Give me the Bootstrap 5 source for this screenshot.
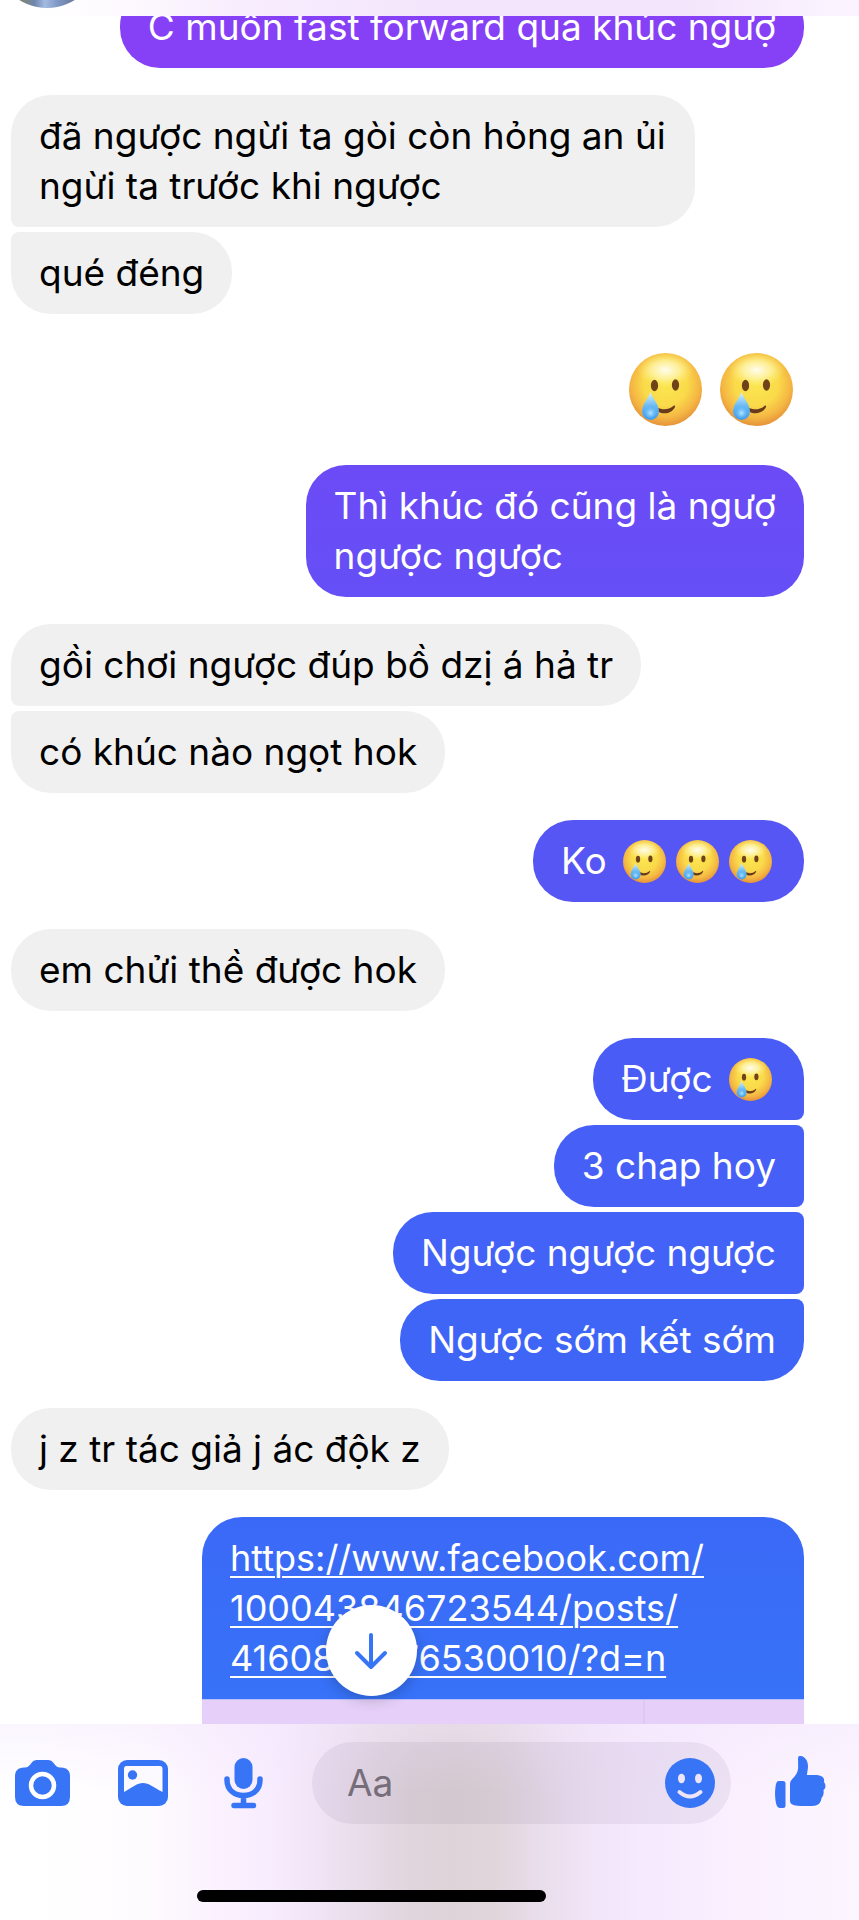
<!DOCTYPE html>
<html lang="vi">
<head>
<meta charset="utf-8">
<meta name="viewport" content="width=device-width, initial-scale=1">
<title>Tin nhắn</title>
<link href="https://cdn.jsdelivr.net/npm/bootstrap@5.3.0/dist/css/bootstrap.min.css" rel="stylesheet">
<style>
  body { font-family: Inter, "Noto Sans", sans-serif; background: #fff; color: #000; }
  .top-strip { height: 16px; background: linear-gradient(90deg, #fff 4%, #fdf9fe 15%, #f8edfe 28%, #f3e6fc 50%, #f3e5fb 80%, #fbf3ff 97%); z-index: 2; }
  .avatar { width: 104px; height: 104px; left: -5px; bottom: 8px; background: linear-gradient(90deg, #7d8474 25%, #6f87ad 38%, #a3bbe0 48%, #7f97c6 60%, #6c7c9c 75%); }
  .thread { padding: 0 55px 0 11px; gap: 27px; min-height: 0; }
  .run { gap: 5px; }
  .bubble { padding: 16px 28px; border-radius: 40px; font-size: 37px; line-height: 50px; max-width: 684px; overflow-wrap: break-word; }
  .them .bubble { background: #f0f0f0; }
  .them .bubble:not(:last-child) { border-bottom-left-radius: 8px; }
  .them .bubble:not(:first-child) { border-top-left-radius: 8px; }
  .me .bubble { color: #fff; max-width: 720px; }
  .me .bubble:not(:last-child) { border-bottom-right-radius: 8px; }
  .me .bubble:not(:first-child) { border-top-right-radius: 8px; }
  .tone-1 { background: #8640f6; }
  .tone-2 { background: linear-gradient(#6c4bf6, #654ff6); }
  .tone-3 { background: #5656f5; }
  .tone-4 { background: #4a5cf6; }
  .tone-5 { background: #465ff6; }
  .tone-6 { background: #4362f7; }
  .tone-7 { background: #3f65f7; }
  .tone-8 { background: linear-gradient(#3b69f7, #3772f8); }
  .emoji { width: 43px; height: 43px; margin: 0 4px 0 6px; vertical-align: -9px; }
  .big-emoji { padding: 12px 11px; gap: 18px; }
  .big-emoji svg { width: 73px; height: 73px; }
  .shared { width: 602px; border-radius: 40px 40px 0 0; overflow: hidden; }
  .shared a { display: block; padding: 16px 28px; color: #fff; font-size: 36px; line-height: 50px; text-decoration-thickness: 2px; text-underline-offset: 5px; }
  .preview { height: 25px; border-top: 1px solid #b9bffa; background: #e6d0f9; }
  .preview i { width: 2px; margin-left: 441px; height: 100%; background: #dec9f1; display: block; }
  .composer { height: 196px; background: linear-gradient(#f3e7fd66, #f3e7fd00 35%), linear-gradient(90deg, #fff 4%, #fefbff 17%, #fbf2fe 25%, #f7ecfe 32%, #f0e4f6 37%, #e8dde9 42%, #e0d5dc 48%, #ded3d8 53%, #e1d6dc 58%, #e9deeb 63%, #f1e5f8 69%, #f5eafe 75%, #faf0fe 86%, #fcf6ff 100%); }
  .composer button { border: 0; background: none; padding: 0; color: #3875f6; line-height: 0; }
  .tools { padding: 18px 33px 0 14px; }
  .tool-set { gap: 46px; width: 298px; }
  .field { height: 82px; min-width: 0; margin-right: 43px; border-radius: 41px; background: #5a3c6e14; padding: 0 16px 0 35px; }
  .field input { width: 0; font-size: 37px; color: #000; background: none; border: 0; outline: 0; min-width: 0; padding: 0; }
  .field input::placeholder { color: #766d7a; opacity: 1; }
  .jump { width: 91px; height: 91px; left: calc(50% - 104px); bottom: 28px; border: 0; background: #fff; color: #3875f6; box-shadow: 0 4px 14px #0003; }
  .home-bar { width: 349px; height: 12px; border-radius: 6px; background: #000; left: 197px; bottom: 18px; }
</style>
</head>
<body>
<svg width="0" height="0" class="position-absolute" aria-hidden="true">
  <defs>
    <radialGradient id="skin" cx=".5" cy=".42" r=".6">
      <stop offset="0" stop-color="#fbe650"/><stop offset=".5" stop-color="#fada4a"/><stop offset=".78" stop-color="#f4b643"/><stop offset="1" stop-color="#e28c38"/>
    </radialGradient>
    <radialGradient id="shine">
      <stop offset="0" stop-color="#fffdf0"/><stop offset=".5" stop-color="#fff8bc" stop-opacity=".7"/><stop offset="1" stop-color="#fff27a" stop-opacity="0"/>
    </radialGradient>
    <linearGradient id="drop" x1="0" y1="0" x2="0" y2="1">
      <stop offset="0" stop-color="#d9f3fd"/><stop offset=".5" stop-color="#69b9f3"/><stop offset="1" stop-color="#3f9bee"/>
    </linearGradient>
    <radialGradient id="dropGlow"><stop offset="0" stop-color="#b5e6fd"/><stop offset="1" stop-color="#7fd0fa" stop-opacity="0"/></radialGradient>
    <symbol id="tear" viewBox="0 0 73 73">
      <circle cx="36.500" cy="36.500" r="36.500" fill="url(#skin)"/>
      <ellipse cx="36.500" cy="17" rx="28" ry="17" fill="url(#shine)"/>
      <ellipse cx="25.500" cy="32.500" rx="3.600" ry="5.800" fill="#70421a"/>
      <ellipse cx="46.500" cy="32" rx="3.600" ry="5.800" fill="#70421a"/>
      <path d="M28 54.500C34 57.500 41 56.500 45 52.500Q46.500 52 46 54C42.500 61 34 62 28 58Z" fill="#68391a"/>
      <path d="M21.500 39C24 46 30 51.500 30 58.500A8.500 8.500 0 0 1 13 58.500C13 51.500 19 46 21.500 39Z" fill="url(#drop)"/>
      <ellipse cx="21.500" cy="60" rx="6" ry="6" fill="url(#dropGlow)"/>
    </symbol>
  </defs>
</svg>
<div class="vh-100 d-flex flex-column overflow-hidden">
  <header class="top-strip position-relative flex-shrink-0 overflow-hidden">
    <div class="avatar position-absolute rounded-circle"></div>
  </header>

  <main class="position-relative flex-grow-1 d-flex flex-column justify-content-end overflow-hidden thread">
    <div class="run me d-flex flex-column align-items-end"><div class="bubble tone-1">C muốn fast forward qua khúc ngượ</div></div>
    <div class="run them d-flex flex-column align-items-start">
      <div class="bubble">đã ngược ngừi ta gòi còn hỏng an ủi ngừi ta trước khi ngược</div>
      <div class="bubble">qué đéng</div>
    </div>
    <div class="big-emoji d-flex justify-content-end">
      <svg role="img" aria-label="🥲"><use href="#tear"/></svg><svg role="img" aria-label="🥲"><use href="#tear"/></svg>
    </div>
    <div class="run me d-flex flex-column align-items-end"><div class="bubble tone-2">Thì khúc đó cũng là ngượ<br>ngược ngược</div></div>
    <div class="run them d-flex flex-column align-items-start">
      <div class="bubble">gồi chơi ngược đúp bồ dzị á hả tr</div>
      <div class="bubble">có khúc nào ngọt hok</div>
    </div>
    <div class="run me d-flex flex-column align-items-end"><div class="bubble tone-3">Ko <svg class="emoji"><use href="#tear"/></svg><svg class="emoji"><use href="#tear"/></svg><svg class="emoji"><use href="#tear"/></svg></div></div>
    <div class="run them d-flex flex-column align-items-start"><div class="bubble">em chửi thề được hok</div></div>
    <div class="run me d-flex flex-column align-items-end">
      <div class="bubble tone-4">Được <svg class="emoji"><use href="#tear"/></svg></div>
      <div class="bubble tone-5">3 chap hoy</div>
      <div class="bubble tone-6">Ngược ngược ngược</div>
      <div class="bubble tone-7">Ngược sớm kết sớm</div>
    </div>
    <div class="run them d-flex flex-column align-items-start"><div class="bubble">j z tr tác giả j ác độk z</div></div>
    <div class="run me d-flex flex-column align-items-end">
      <div class="shared">
        <a class="tone-8" href="#">https://www.facebook.com/<br>100043846723544/posts/<br>4160837576530010/?d=n</a>
        <div class="preview"><i></i></div>
      </div>
    </div>
    <button class="jump position-absolute rounded-circle d-flex align-items-center justify-content-center" type="button" aria-label="Xuống cuối">
      <svg width="34" height="38" viewBox="0 0 34 38" fill="none" stroke="currentColor" stroke-width="4" stroke-linecap="round" stroke-linejoin="round"><path d="M17 3V35M3 21L17 35L31 21"/></svg>
    </button>
  </main>

  <footer class="composer position-relative flex-shrink-0">
    <form class="tools d-flex align-items-center">
      <div class="tool-set d-flex align-items-center flex-shrink-0">
        <button type="button" aria-label="Máy ảnh"><svg width="57" height="54" viewBox="0 0 57 54"><path fill="currentColor" d="M10 11.500C14 11.500 15 10 17 7.500C19 5 20 4 24 4H33C37 4 38 5 40 7.500C42 10 43 11.500 47 11.500C53 11.500 56 15 56 20V41Q56 50 47 50H10Q1 50 1 41V20C1 15 4 11.500 10 11.500Z"/><circle cx="28.500" cy="29.500" r="11.500" fill="none" stroke="#fff" stroke-width="4.500"/></svg></button>
        <button type="button" aria-label="Ảnh"><svg width="52" height="54" viewBox="0 0 52 54"><rect x="1" y="4" width="50" height="46" rx="9" fill="currentColor"/><path fill="#fdfaff" d="M9 10H43Q45.500 10 45.500 12.500V36C36 31 32 27 26 27S16 31 7 36V12.500Q7 10 9 10Z"/><circle cx="15.500" cy="19" r="4.700" fill="currentColor"/></svg></button>
        <button type="button" aria-label="Ghi âm"><svg width="56" height="54" viewBox="0 0 56 54"><rect x="19.500" y="2" width="18" height="31" rx="9" fill="currentColor"/><path d="M12 23V24C12 34 19.500 39.500 28.500 39.500S45 34 45 24V23M28.500 40V48M19 49.500H38.500" fill="none" stroke="currentColor" stroke-width="5.500" stroke-linecap="round"/></svg></button>
      </div>
      <div class="field flex-grow-1 d-flex align-items-center">
        <input class="flex-grow-1" type="text" placeholder="Aa" aria-label="Tin nhắn">
        <button type="button" aria-label="Biểu tượng cảm xúc"><svg width="50" height="50" viewBox="0 0 50 50"><circle cx="25" cy="25" r="25" fill="currentColor"/><ellipse cx="16.500" cy="20.500" rx="3.500" ry="4.800" fill="#efe5fa"/><ellipse cx="33.500" cy="20.500" rx="3.500" ry="4.800" fill="#efe5fa"/><path d="M14.500 34Q25 43 35.500 34" fill="none" stroke="#efe5fa" stroke-width="4" stroke-linecap="round"/></svg></button>
      </div>
      <button class="flex-shrink-0" type="button" aria-label="Thích"><svg width="52" height="54" viewBox="0 0 52 54"><path fill="currentColor" d="M4.500 25H9Q11.500 25 11.500 27.500V49.500Q11.500 52 9 52H5.500Q3.500 52 2.500 49C.5 42 .8 34 2 28Q2.700 25 4.500 25ZM25.500 0C30 -.5 34 4 34 10C34 14 33 16.500 33 19H41C47 19 51 21 50 26C52 28.500 52 32 49.500 34C50 37 49.500 40 47.500 42C47 47 44 50 38 50H29C21 50 16 49 16 45V28C16 24 19 23 22 18.500C25 14 24 10 24 3Q24 0 25.500 0Z"/></svg></button>
    </form>
    <div class="home-bar position-absolute"></div>
  </footer>
</div>
<script src="https://cdn.jsdelivr.net/npm/bootstrap@5.3.0/dist/js/bootstrap.bundle.min.js"></script>
</body>
</html>
